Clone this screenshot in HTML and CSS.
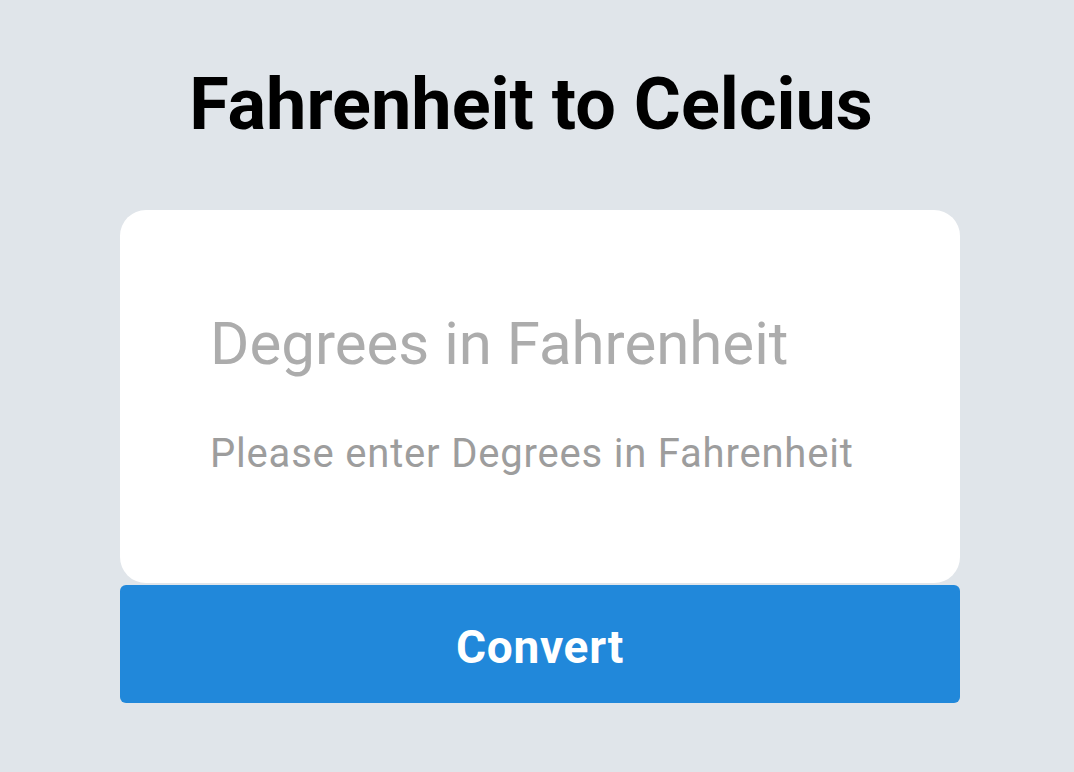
FILE: index.html
```html
<!DOCTYPE html>
<html lang="en">
<head>
<meta charset="utf-8">
<title>Fahrenheit to Celcius</title>
<link rel="stylesheet" href="styles.css">
</head>
<body>
  <main class="app">
    <h1 class="title">Fahrenheit to Celcius</h1>
    <section class="card">
      <input class="degrees-input" type="text" placeholder="Degrees in Fahrenheit">
      <p class="helper">Please enter Degrees in Fahrenheit</p>
    </section>
    <button class="convert-btn" type="button">Convert</button>
  </main>
</body>
</html>
```

FILE: styles.css
```css
html, body {
  margin: 0;
  padding: 0;
}

body {
  background: #e0e5ea;
  font-family: Roboto, "Liberation Sans", sans-serif;
  height: 772px;
  overflow: hidden;
}

.app {
  width: 840px;
  margin-left: 120px;
  display: flex;
  flex-direction: column;
}

.title {
  margin: 0;
  padding-top: 69px;
  font-size: 72px;
  line-height: 72px;
  font-weight: 700;
  color: #000;
  text-align: center;
  padding-right: 18px;
}

.card {
  margin-top: 69px;
  height: 373px;
  box-sizing: border-box;
  background: #fff;
  border-radius: 26px;
  padding: 98px 0 0 90px;
  display: flex;
  flex-direction: column;
}

.degrees-input {
  border: none;
  outline: none;
  padding: 0;
  margin: 0;
  background: transparent;
  font-family: Roboto, "Liberation Sans", sans-serif;
  font-size: 60px;
  line-height: 72px;
  height: 72px;
  width: 700px;
  color: #333;
}

.degrees-input::placeholder {
  color: #acacac;
  opacity: 1;
}

.helper {
  margin: 54px 0 0;
  font-size: 40px;
  line-height: 40px;
  letter-spacing: 0.8px;
  color: #9d9d9d;
}

.convert-btn {
  margin-top: 2px;
  height: 118px;
  border: none;
  border-radius: 6px;
  background: #2188da;
  color: #fff;
  font-family: Roboto, "Liberation Sans", sans-serif;
  font-size: 46px;
  font-weight: 700;
  letter-spacing: 0.7px;
  padding: 6px 0 0;
  cursor: pointer;
}
```
